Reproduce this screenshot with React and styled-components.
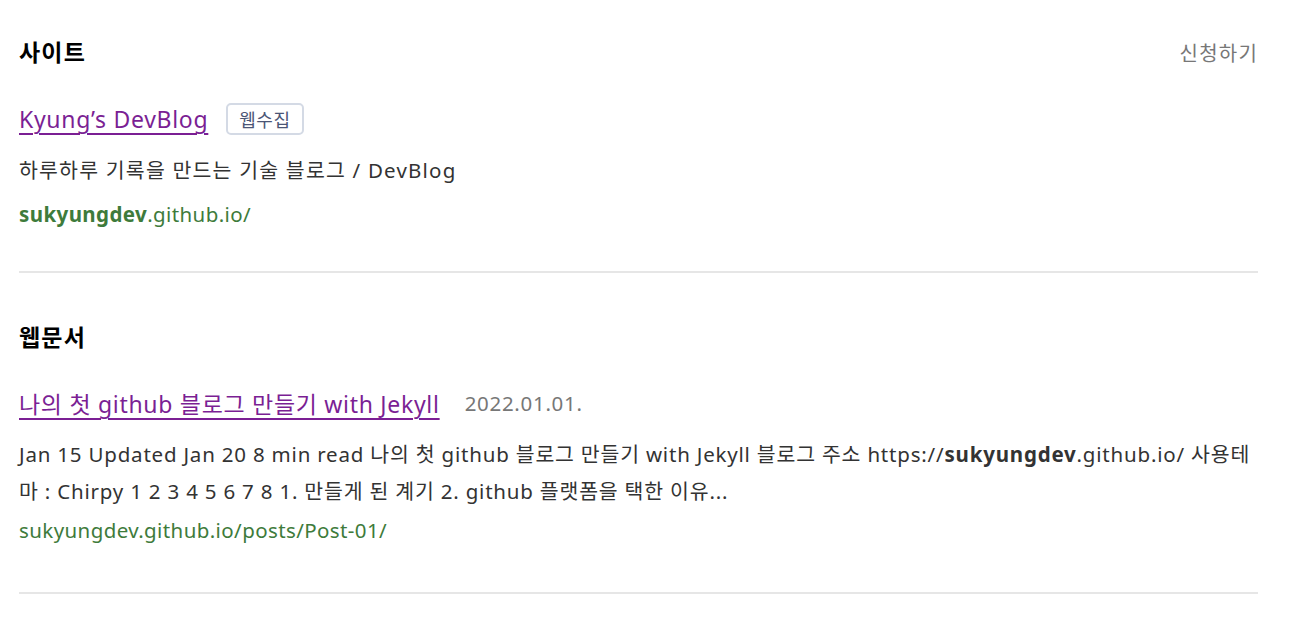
import React from 'react'
import styled, { createGlobalStyle } from 'styled-components'

const GlobalStyle = createGlobalStyle`
  body {
    margin: 0;
    background: #fff;
    font-family: "Noto Sans", "Noto Sans CJK KR", sans-serif;
  }
`

const Page = styled.div`
  padding: 0 32px 0 19px;
`

const Section = styled.section`
  padding: ${p => p.top}px 0 ${p => p.bottom}px;
  border-bottom: 2px solid #e6e6e6;
`

const Header = styled.div`
  display: flex;
  justify-content: space-between;
  align-items: center;
  height: 28px;
  margin-bottom: ${p => p.gap}px;
`

const Heading = styled.h2`
  margin: 0;
  font-size: 23px;
  line-height: 28px;
  font-weight: 700;
  color: #000;
  letter-spacing: 1.2px;
`

const Apply = styled.a`
  font-size: 20px;
  color: #777;
  text-decoration: none;
  letter-spacing: 1.2px;
`

const TitleRow = styled.div`
  display: flex;
  align-items: center;
  height: 34px;
`

const TitleLink = styled.a`
  font-size: 23px;
  color: #7b1f94;
  letter-spacing: 0.7px;
  text-decoration: underline;
  text-decoration-thickness: 2px;
  text-underline-offset: 5px;
  margin-right: ${p => p.gap}px;
`

const Badge = styled.span`
  display: inline-flex;
  align-items: center;
  box-sizing: border-box;
  height: 32px;
  padding: 0 11px;
  border: 2px solid #d4dae5;
  border-radius: 5px;
  font-size: 18px;
  letter-spacing: 0.5px;
  color: #4b5575;
`

const DateText = styled.span`
  font-size: 20.5px;
  color: #777;
  letter-spacing: 0.7px;
`

const Desc = styled.p`
  margin: 19px 0 0;
  font-size: 20.5px;
  line-height: 30px;
  color: #333;
  letter-spacing: 1.2px;
`

const Snippet = styled(Desc)`
  margin-top: 16px;
  font-size: 20.5px;
  line-height: 37px;
  letter-spacing: 0.8px;
  b { font-weight: 700; }
`

const Url = styled.div`
  margin-top: ${p => p.gap}px;
  font-size: 20.5px;
  line-height: 28px;
  letter-spacing: 0.4px;
  color: #3e7b3b;
  b { font-weight: 700; }
`

export default function App() {
  return (
    <Page>
      <GlobalStyle />
      <Section top={38} bottom={43}>
        <Header gap={36}>
          <Heading>사이트</Heading>
          <Apply href="#">신청하기</Apply>
        </Header>
        <TitleRow>
          <TitleLink href="#" gap={18}>Kyung’s DevBlog</TitleLink>
          <Badge>웹수집</Badge>
        </TitleRow>
        <Desc>하루하루 기록을 만드는 기술 블로그 / DevBlog</Desc>
        <Url gap={15}><b>sukyungdev</b>.github.io/</Url>
      </Section>
      <Section top={50} bottom={48}>
        <Header gap={35}>
          <Heading>웹문서</Heading>
        </Header>
        <TitleRow>
          <TitleLink href="#" gap={25}>나의 첫 github 블로그 만들기 with Jekyll</TitleLink>
          <DateText>2022.01.01.</DateText>
        </TitleRow>
        <Snippet>
          Jan 15 Updated Jan 20 8 min read 나의 첫 github 블로그 만들기 with Jekyll 블로그 주소 https://<b>sukyungdev</b>.github.io/ 사용테마 : Chirpy 1 2 3 4 5 6 7 8 1. 만들게 된 계기 2. github 플랫폼을 택한 이유...
        </Snippet>
        <Url gap={6}>sukyungdev.github.io/posts/Post-01/</Url>
      </Section>
    </Page>
  )
}
